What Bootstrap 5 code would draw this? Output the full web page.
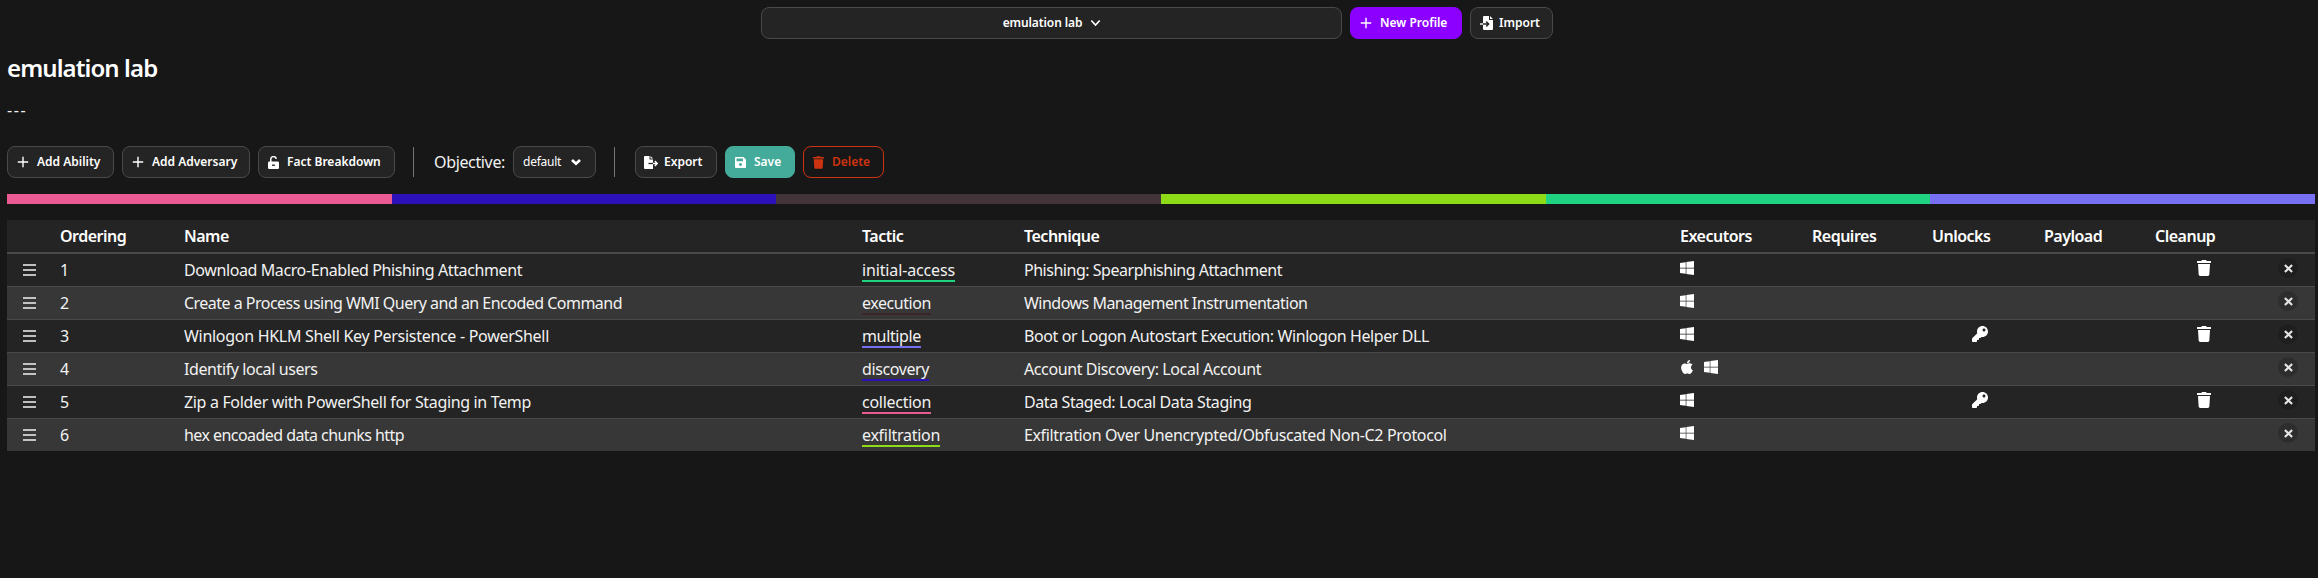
<!DOCTYPE html>
<html lang="en" data-bs-theme="dark">
<head>
<meta charset="utf-8">
<title>emulation lab</title>
<link href="https://cdn.jsdelivr.net/npm/bootstrap@5.3.0/dist/css/bootstrap.min.css" rel="stylesheet">
<style>
body{background:#171717;color:#f2f2f2;font-family:"Noto Sans",sans-serif;font-size:16px;line-height:24px;padding:7px 3px 0 7px;overflow:hidden}
.topbar{padding-left:754px;gap:8px}
.tool{--bs-btn-font-size:12px;--bs-btn-font-weight:600;--bs-btn-line-height:18px;--bs-btn-color:#fff;--bs-btn-bg:#242424;--bs-btn-border-color:#4a4a4a;--bs-btn-border-radius:8px;--bs-btn-padding-x:0;--bs-btn-padding-y:0;height:32px;display:inline-flex;align-items:center;white-space:nowrap;padding-left:9px;flex:none}
.tool svg{flex:none}
.profile-pick{width:581px;justify-content:center;padding:0 0 0 1px;letter-spacing:-.1px}
.violet{--bs-btn-bg:#8b00ff;--bs-btn-border-color:#8b00ff}
.teal{--bs-btn-bg:#44ab9a;--bs-btn-border-color:#44ab9a}
.danger-line{--bs-btn-bg:#171717;--bs-btn-border-color:#cd3311;--bs-btn-color:#cd3311}
h1{font-size:24px;font-weight:600;line-height:27px;margin:15px 0 0;color:#fff;letter-spacing:-.9px}
.desc{margin:17px 0 0;height:24px;letter-spacing:1.6px}
.toolbar{margin-top:24px;gap:8px}
.rule{width:1px;height:30px;background:#757575}
.objective-label{width:71px;letter-spacing:-.35px;white-space:nowrap}
.objective{width:83px;font-weight:400;--bs-btn-font-weight:400;letter-spacing:-.25px}
.tactics{height:10px;margin-top:16px}
.steps{--bs-table-bg:transparent;--bs-table-color:#f2f2f2;table-layout:fixed;width:2308px;margin-top:16px;margin-bottom:0;border-collapse:separate;border-spacing:0}
.steps>:not(caption)>*>*{padding:4px 8px;height:33px;background:#242424;border-bottom:1px solid #4a4a4a;color:#f2f2f2;vertical-align:top;box-shadow:none;white-space:nowrap}
.steps>thead>tr>th{height:34px;border-bottom-width:2px;font-weight:600;color:#fff;letter-spacing:-.5px}
.steps>tbody>tr:nth-child(even)>td{background:#373737}
.steps>tbody>tr:last-child>td{border-bottom:0;height:32px}
.steps td svg{display:block;fill:#fff}
.steps td.unl{padding-left:48px}
.steps td.cln{padding-left:50px}
.tac{display:inline-block;height:24px;line-height:24px;border-bottom:2px solid}
.grip{margin:6px 0 0 12px}
.closer{width:20px;height:20px;border-radius:50%;background:#1e1e1e;border:0;padding:0;display:flex;align-items:center;justify-content:center}
tr:nth-child(even) .closer{background:#2d2d2d}
</style>
</head>
<body>
<svg width="0" height="0" class="position-absolute">
<symbol id="plus" viewBox="0 0 12 12"><path d="M6 .8v10.4M.8 6h10.4" stroke="currentColor" stroke-width="1.4" fill="none"/></symbol>
<symbol id="win" viewBox="0 0 448 512"><path d="M0 93.7l183.600-25.300v177.400H0V93.700zm0 324.600l183.600 25.300V268.400H0v149.900zm203.800 28L448 480V268.400H203.800v177.900zm0-380.600v180.100H448V32L203.800 65.700z"/></symbol>
<symbol id="apple" viewBox="0 0 384 512"><path d="M318.700 268.700c-.2-36.700 16.400-64.400 50-84.800-18.800-26.900-47.200-41.700-84.700-44.600-35.500-2.800-74.300 20.700-88.500 20.700-15 0-49.400-19.700-76.400-19.700C63.300 141.200 4 184.800 4 273.500q0 39.300 14.400 81.200c12.800 36.700 59 126.700 107.200 125.200 25.200-.6 43-17.900 75.800-17.900 31.800 0 48.300 17.900 76.400 17.900 48.600-.7 90.400-82.500 102.600-119.300-65.200-30.700-61.700-90-61.700-91.900zm-56.600-164.200c27.300-32.400 24.800-61.900 24-72.500-24.100 1.400-52 16.400-67.900 34.900-17.500 19.800-27.800 44.300-25.600 71.900 26.100 2 49.900-11.400 69.500-34.300z"/></symbol>
<symbol id="key" viewBox="0 0 512 512"><path d="M512 176.001C512 273.203 433.202 352 336 352c-11.220 0-22.190-1.062-32.827-3.069l-24.012 27.014A23.999 23.999 0 0 1 261.223 384H224v40c0 13.255-10.745 24-24 24h-40v40c0 13.255-10.745 24-24 24H24c-13.255 0-24-10.745-24-24v-78.059c0-6.365 2.529-12.470 7.029-16.971l161.802-161.802C163.108 213.814 160 195.271 160 176 160 78.798 238.797.001 335.999 0 433.488-.001 512 78.511 512 176.001zM336 128c0 26.510 21.490 48 48 48s48-21.490 48-48-21.490-48-48-48-48 21.490-48 48z"/></symbol>
<symbol id="trash" viewBox="0 0 448 512"><path d="M432 32H312l-9.400-18.700A24 24 0 0 0 281.100 0H166.800a23.720 23.720 0 0 0-21.400 13.300L136 32H16A16 16 0 0 0 0 48v32a16 16 0 0 0 16 16h416a16 16 0 0 0 16-16V48a16 16 0 0 0-16-16zM32 128l21.200 339a48 48 0 0 0 47.900 45h245.800a48 48 0 0 0 47.900-45L416 128z"/></symbol>
<symbol id="x" viewBox="0 0 8 8"><path d="M.8 .8l6.400 6.400M7.200 .8L.8 7.200" stroke="#e4e4e4" stroke-width="1.900" fill="none"/></symbol>
<symbol id="bars" viewBox="0 0 13 12"><path d="M0 1h13M0 6h13M0 11h13" stroke="#f2f2f2" stroke-width="1.500" fill="none"/></symbol>
</svg>

<header class="topbar d-flex">
<button class="btn tool profile-pick">emulation lab<svg class="ms-2" width="11" height="8" viewBox="0 0 10 8"><path d="M.8 1.500L5 6l4.200-4.500" fill="none" stroke="#fff" stroke-width="1.600"/></svg></button>
<button class="btn tool violet" style="width:112px"><svg class="me-2" width="12" height="12"><use href="#plus"/></svg>New Profile</button>
<button class="btn tool" style="width:83px"><svg width="13" height="14" viewBox="0 0 13 14" style="margin-right:6px"><path fill="#fff" d="M4 0h5v4h4v9a1 1 0 0 1-1 1H4a1 1 0 0 1-1-1V1a1 1 0 0 1 1-1zM10 0l3 3h-3z"/><path d="M3 8h5M6.200 5.500L8.700 8l-2.500 2.500" stroke="#242424" stroke-width="1.400" fill="none"/><path d="M0 8h3" stroke="#fff" stroke-width="1.400"/></svg>Import</button>
</header>
<h1>emulation lab</h1>
<p class="desc">---</p>
<div class="toolbar d-flex align-items-center">
<button class="btn tool" style="width:107px"><svg class="me-2" width="12" height="12"><use href="#plus"/></svg>Add Ability</button>
<button class="btn tool" style="width:128px"><svg class="me-2" width="12" height="12"><use href="#plus"/></svg>Add Adversary</button>
<button class="btn tool" style="width:137px"><svg width="11" height="13" viewBox="0 0 11 13" style="margin-right:8px"><path d="M2.800 6V3.500a2.700 2.700 0 0 1 5.400-.5" fill="none" stroke="#fff" stroke-width="1.500"/><rect y="5.500" width="11" height="7.500" rx="1.200" fill="#fff"/><path d="M4 9.200h3" stroke="#242424" stroke-width="1.300"/></svg>Fact Breakdown</button>
<div class="rule" style="margin:0 12px 0 10px"></div>
<div class="d-flex align-items-center gap-2"><span class="objective-label">Objective:</span>
<button class="btn tool objective">default<svg style="margin-left:10px" width="10" height="8" viewBox="0 0 10 8"><path d="M1 2l4 3.700L9 2" fill="none" stroke="#fff" stroke-width="2.700"/></svg></button></div>
<div class="rule" style="margin:0 12px 0 10px"></div>
<button class="btn tool" style="width:82px;padding-left:8px"><svg width="14" height="13" viewBox="0 0 14 13" style="margin-right:6px"><path fill="#fff" d="M1 0h4.500v3.500H9V13H1a1 1 0 0 1-1-1V1a1 1 0 0 1 1-1zM6.500 0L9 2.500H6.500z"/><path d="M4.500 7.500H9" stroke="#242424" stroke-width="1.300"/><path d="M9 7.500h4M10.800 5l2.500 2.500-2.500 2.500" stroke="#fff" stroke-width="1.300" fill="none"/></svg>Export</button>
<button class="btn tool teal" style="width:70px"><svg width="11" height="11" viewBox="0 0 11 11" style="margin-right:8px"><path fill="#fff" fill-rule="evenodd" d="M1 0h7.500L11 2.500V10a1 1 0 0 1-1 1H1a1 1 0 0 1-1-1V1a1 1 0 0 1 1-1zM1.500 1.500v2.700h6.500V1.500zM5.500 6a1.500 1.500 0 1 0 .01 0z"/></svg>Save</button>
<button class="btn tool danger-line" style="width:81px"><svg width="11" height="13" style="margin-right:8px" fill="#cd3311"><use href="#trash"/></svg>Delete</button>
</div>

<div class="tactics d-flex">
<div class="flex-fill" style="background:#eb5a92"></div><div class="flex-fill" style="background:#2c11ba"></div><div class="flex-fill" style="background:#423439"></div><div class="flex-fill" style="background:#8edb17"></div><div class="flex-fill" style="background:#20d383"></div><div class="flex-fill" style="background:#7870f2"></div>
</div>

<table class="table steps">
<colgroup><col style="width:45px"><col style="width:124px"><col style="width:678px"><col style="width:162px"><col style="width:656px"><col style="width:132px"><col style="width:120px"><col style="width:112px"><col style="width:111px"><col style="width:123px"><col></colgroup>
<thead><tr><th></th><th>Ordering</th><th>Name</th><th>Tactic</th><th>Technique</th><th>Executors</th><th>Requires</th><th>Unlocks</th><th>Payload</th><th>Cleanup</th><th></th></tr></thead>
<tbody id="rows"></tbody>
</table>
<script src="https://cdn.jsdelivr.net/npm/bootstrap@5.3.0/dist/js/bootstrap.bundle.min.js"></script>
<script>
// name, its width, tactic, its width, tactic colour, technique, its width, on macOS, unlocks, cleanup
const steps=[
["Download Macro-Enabled Phishing Attachment",338,"initial-access",93,"#20d383","Phishing: Spearphishing Attachment",258,0,0,1],
["Create a Process using WMI Query and an Encoded Command",438,"execution",69,"#3a2529","Windows Management Instrumentation",283.5,0,0,0],
["Winlogon HKLM Shell Key Persistence - PowerShell",365,"multiple",59,"#7870f2","Boot or Logon Autostart Execution: Winlogon Helper DLL",405,0,1,1],
["Identify local users",133.500,"discovery",67,"#2c11ba","Account Discovery: Local Account",237,1,0,0],
["Zip a Folder with PowerShell for Staging in Temp",347,"collection",69,"#eb5a92","Data Staged: Local Data Staging",227.5,0,1,1],
["hex encoaded data chunks http",220,"exfiltration",78,"#8edb17","Exfiltration Over Unencrypted/Obfuscated Non-C2 Protocol",422.5,0,0,0]];
const icon=(n,w,h,c='')=>`<svg class="${c}" width="${w}" height="${h}"><use href="#${n}"/></svg>`;
document.getElementById('rows').innerHTML=steps.map((s,i)=>`<tr><td class="ps-1">${icon('bars',13,12,'grip')}</td><td>${i+1}</td><td><span data-w="${s[1]}">${s[0]}</span></td><td><span class="tac" data-w="${s[3]}" style="border-color:${s[4]}">${s[2]}</span></td><td><span data-w="${s[6]}">${s[5]}</span></td><td><div class="d-flex" style="gap:10px;padding-top:2px">${s[7]?icon('apple',14,16):''}${icon('win',14,16)}</div></td><td></td><td class="unl"><div style="padding-top:2px">${s[8]?icon('key',16,16):''}</div></td><td></td><td class="cln"><div style="padding-top:2px">${s[9]?icon('trash',14,16):''}</div></td><td><button class="closer">${icon('x',9,9)}</button></td></tr>`).join('');
// track each label to its set width
document.querySelectorAll('[data-w]').forEach(e=>{e.style.letterSpacing=((e.dataset.w-e.getBoundingClientRect().width)/e.textContent.length).toFixed(3)+'px'});
</script>
</body>
</html>
